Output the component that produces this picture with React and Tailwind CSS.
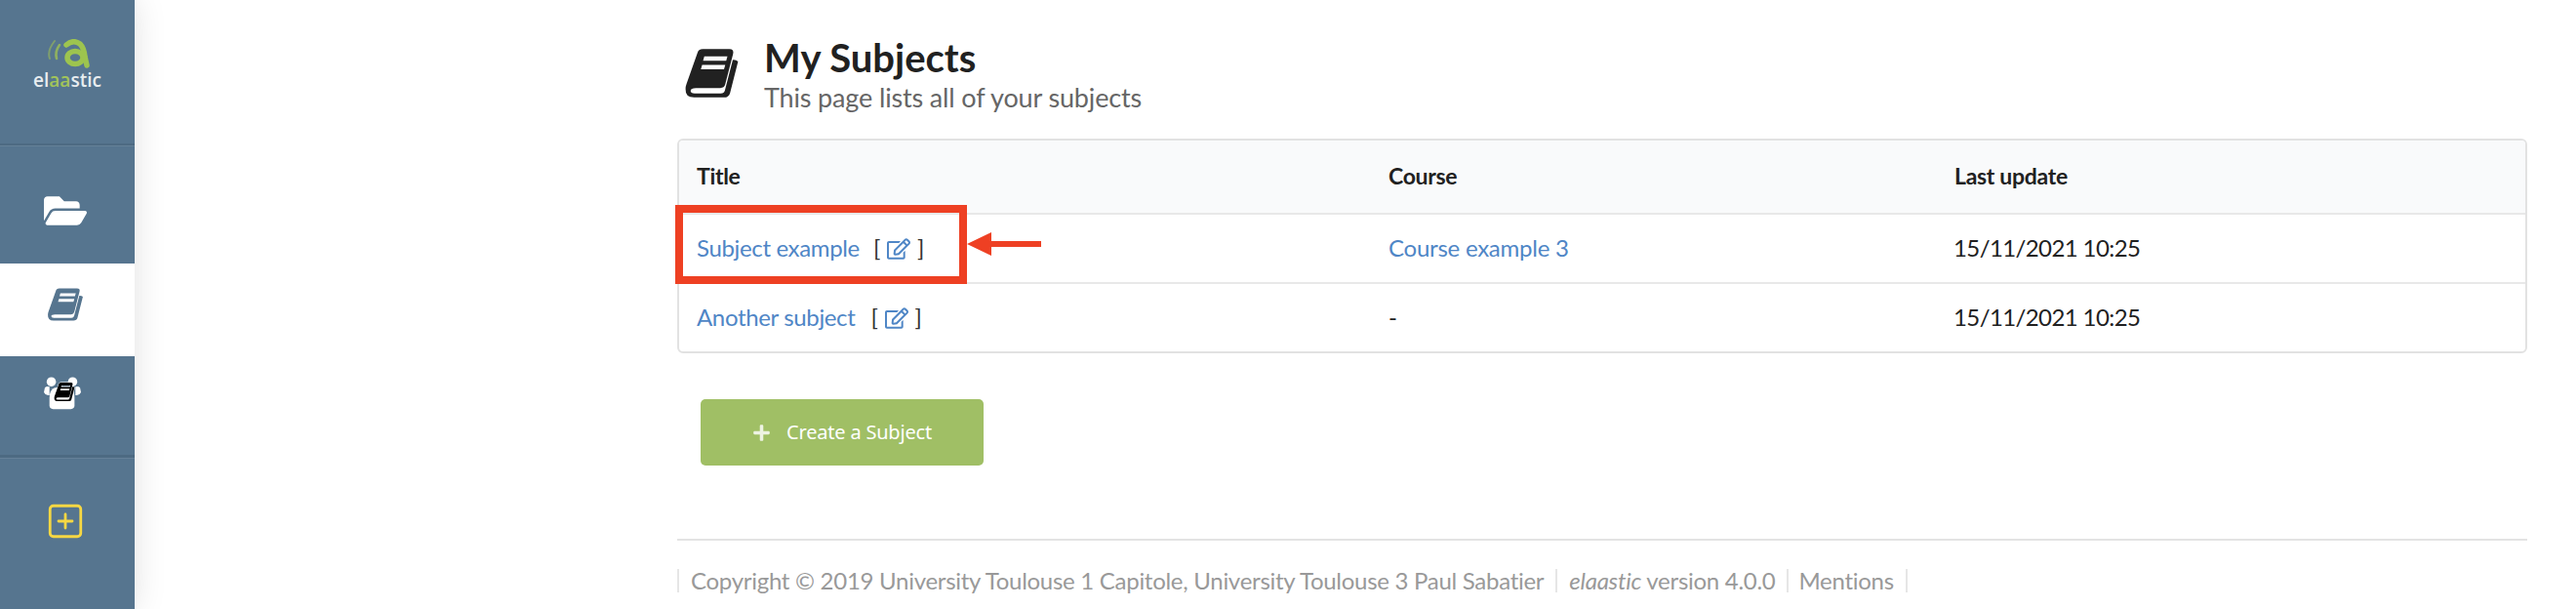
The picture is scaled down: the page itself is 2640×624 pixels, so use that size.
import { FaFolderOpen, FaPlus, FaRegEdit } from "react-icons/fa";
import { SquarePlus } from "lucide-react";

function Book({ className, stroke }) {
  return (
    <svg viewBox="60 85 178 165" className={className} fill="currentColor" stroke={stroke} strokeWidth={stroke ? 8 : 0} paintOrder="stroke">
      <path
        fillRule="evenodd"
        d="M103 103Q106 90 120 90H205Q221 90 217 106L192 203Q189 215 176 215H98Q82 215 81 224Q81 232 94 232H178Q188 232 191 222L216 125Q226 124 233 130L207 232Q203 245 188 245H92Q64 245 65 218Q65 210 68 202ZM125 114L121 128H195L199 114ZM118 141L114 155H188L192 141Z"
      />
    </svg>
  );
}

function Logo() {
  return (
    <div className="flex flex-col items-center">
      <svg viewBox="0 0 44 30" className="w-[44px] h-[30px] ml-[2px]" fill="none">
        <path d="M8 2Q0 12 3 20" stroke="#7f9f6d" strokeWidth="2" strokeLinecap="round" />
        <path d="M13 6Q8 13 10 20" stroke="#8fb060" strokeWidth="2.6" strokeLinecap="round" />
        <path d="M20 6Q27 0 34 5Q38 9 39 18L41 27" stroke="#9dc44f" strokeWidth="5.5" strokeLinecap="round" />
        <ellipse cx="29" cy="19" rx="8" ry="6.5" stroke="#9dc44f" strokeWidth="5.5" />
      </svg>
      <div className="text-[19px] leading-[20px] font-['Open_Sans',sans-serif] font-semibold text-[#e8edf0] mt-[2px]">
        el<span className="text-[#a2c45a]">aa</span>stic
      </div>
    </div>
  );
}

function Sidebar() {
  return (
    <aside className="w-[138px] h-[624px] shrink-0 bg-[#56758f] flex flex-col shadow-[0_0_32px_rgba(0,0,0,0.12)] z-10">
      <div className="h-[147px] pt-[40px] flex justify-center">
        <Logo />
      </div>
      <div className="h-[3px] bg-[#4d6a82] border-b border-[#658198]" />
      <div className="h-[120px] flex items-center justify-center pt-[11px] text-white">
        <FaFolderOpen className="w-[44px] h-[40px] mr-[5px]" />
      </div>
      <div className="h-[95px] bg-white flex items-center justify-center pb-[12px] text-[#56758f]">
        <Book className="w-[38px] h-[36px] mr-[4px]" />
      </div>
      <div className="h-[101px] flex justify-center pt-[20px] text-white">
        <div className="relative w-[38px] h-[36px] mr-[10px]">
          <svg viewBox="0 0 40 36" className="w-[38px] h-[36px]" fill="currentColor">
            <circle cx="8" cy="5.5" r="5" />
            <circle cx="31" cy="5.5" r="5" />
            <path d="M1 12Q3 10 6 11L6 20Q2 21 0 17ZM39 12Q37 10 34 11L34 20Q38 21 40 17Z" />
            <path d="M6 23Q6 14 12 12H28Q33 14 33 23V31Q33 35 29 35H10Q6 35 6 31Z" />
          </svg>
          <Book className="absolute left-[10px] top-[6px] w-[22px] h-[21px] text-black" stroke="#fff" />
        </div>
      </div>
      <div className="h-[4px] bg-[#4d6a82] border-b border-[#658198]" />
      <div className="flex-1 flex justify-center pt-[43px] text-[#f6d743]">
        <SquarePlus className="w-[42px] h-[42px] mr-[4px]" strokeWidth={1.6} />
      </div>
    </aside>
  );
}

function EditBracket({ spaced }) {
  return (
    <span className={`text-[#333] ${spaced ? "ml-[16px]" : "ml-[14px]"}`}>
      [<FaRegEdit className="inline-block w-[24px] h-[22px] text-[#4f86c6] mx-[7px] align-[-3px]" />]
    </span>
  );
}

function Row({ title, course, border }) {
  return (
    <div className={`grid grid-cols-[709px_579px_1fr] h-[71px] items-center px-[18px] ${border ? "border-b-2 border-[#e8e8e8] pb-[1px]" : "pb-[3px]"}`}>
      <div className="whitespace-nowrap tracking-[-0.35px]">
        <a className="text-[#4f86c6]">{title}</a>
        <EditBracket spaced={!border} />
      </div>
      <div className="tracking-[-0.25px]">{course ? <a className="text-[#4f86c6]">{course}</a> : "-"}</div>
      <div className="tracking-[-0.6px]">15/11/2021 10:25</div>
    </div>
  );
}

export default function App() {
  return (
    <div className="flex w-[2640px] h-[624px] overflow-hidden bg-white font-['Lato',sans-serif] text-[#212121]">
      <Sidebar />
      <main className="flex-1 pl-[556px] pr-[50px]">
        <header className="flex h-[142px] pt-[34px]">
          <Book className="w-[57px] h-[54px] ml-[7px] mt-[14px]" />
          <div className="ml-[25px]">
            <h1 className="text-[40px] leading-[50px] font-bold">My Subjects</h1>
            <p className="text-[27px] leading-[32px] tracking-[-0.15px] text-[#666] mt-0">This page lists all of your subjects</p>
          </div>
        </header>

        <div className="relative">
          <div className="border-2 border-[#e2e2e2] rounded-[6px] text-[24px] overflow-hidden h-[220px]">
            <div className="grid grid-cols-[709px_579px_1fr] h-[76px] items-center px-[18px] pb-[2px] bg-[#f9fafb] border-b-2 border-[#e8e8e8] font-bold text-[23px] tracking-[-0.3px]">
              <div>Title</div>
              <div>Course</div>
              <div className="pl-[1px]">Last update</div>
            </div>
            <Row title="Subject example" course="Course example 3" border />
            <Row title="Another subject" />
          </div>

          <div className="absolute left-[-2px] top-[68px] w-[299px] h-[81px] border-[8px] border-[#ee4023]" />
          <svg viewBox="0 0 76 26" className="absolute left-[297px] top-[96px] w-[76px] h-[26px]">
            <path d="M0 12L25 0V9H76V15H25V24Z" fill="#ee4023" />
          </svg>
        </div>

        <button className="mt-[47px] ml-[24px] w-[290px] h-[68px] rounded-[5px] bg-[#a0bf65] text-white flex items-center justify-center font-['Noto_Sans',sans-serif] text-[20px] tracking-[-0.2px]">
          <FaPlus className="w-[19px] h-[19px] mr-[16px] text-[#edf3e2]" />
          Create a Subject
        </button>

        <div className="mt-[75px] border-t-2 border-[#e3e3e3]" />

        <footer className="mt-[29px] flex text-[24px] leading-[24px] tracking-[-0.28px] text-[#999] whitespace-nowrap">
          <span className="border-l-2 border-[#e6e6e6] px-[12px]">Copyright © 2019 University Toulouse 1 Capitole, University Toulouse 3 Paul Sabatier</span>
          <span className="border-l-2 border-[#e6e6e6] px-[12px]"><em>elaastic</em> version 4.0.0</span>
          <span className="border-l-2 border-r-2 border-[#e6e6e6] pl-[10px] pr-[12px]">Mentions</span>
        </footer>
      </main>
    </div>
  );
}
